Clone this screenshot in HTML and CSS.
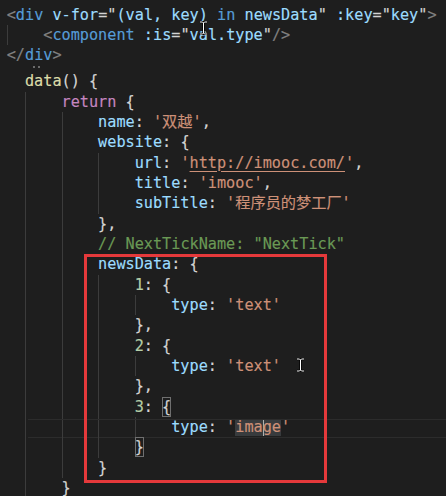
FILE: index.html
```html
<!DOCTYPE html>
<html lang="en">
<head>
    <meta charset="UTF-8">
    <meta name="viewport" content="width=device-width, initial-scale=1.0">
    <title>newsData</title>
    <link rel="stylesheet" href="styles.css">
</head>
<body>
    <div class="editor">
        <div class="line"><span class="pu">&lt;</span><span class="tg">div</span> <span class="at">v-for</span>="<span class="at">(val, key)</span> <span class="tg">in</span> <span class="at">newsData</span>" <span class="at">:key</span>="<span class="at">key</span>"<span class="pu">&gt;</span></div>
        <div class="line"><span class="g"></span><span class="pu">&lt;</span><span class="tg">component</span> <span class="at">:is</span>="<span class="at">val.type</span>"<span class="pu">/&gt;</span></div>
        <div class="line"><span class="pu">&lt;/</span><span class="tg">div</span><span class="pu">&gt;</span></div>
        <div class="gap"><span class="dot"></span><span class="dot"></span></div>

        <div class="line"><span class="s2"></span><span class="fn">data</span>() {</div>
        <div class="line"><span class="s2"></span><span class="g"></span><span class="kw">return</span> {</div>
        <div class="line"><span class="s2"></span><span class="g"></span><span class="g"></span><span class="at">name</span>: <span class="st">'双越'</span>,</div>
        <div class="line"><span class="s2"></span><span class="g"></span><span class="g"></span><span class="at">website</span>: {</div>
        <div class="line"><span class="s2"></span><span class="g"></span><span class="g"></span><span class="g"></span><span class="at">url</span>: <span class="st">'<u>http://imooc.com/</u>'</span>,</div>
        <div class="line"><span class="s2"></span><span class="g"></span><span class="g"></span><span class="g"></span><span class="at">title</span>: <span class="st">'imooc'</span>,</div>
        <div class="line"><span class="s2"></span><span class="g"></span><span class="g"></span><span class="g"></span><span class="at">subTitle</span>: <span class="st">'程序员的梦工厂'</span></div>
        <div class="line"><span class="s2"></span><span class="g"></span><span class="g"></span>},</div>
        <div class="line"><span class="s2"></span><span class="g"></span><span class="g"></span><span class="cm">// NextTickName: "NextTick"</span></div>
        <div class="line"><span class="s2"></span><span class="g"></span><span class="g"></span><span class="at">newsData</span>: {</div>
        <div class="line"><span class="s2"></span><span class="g"></span><span class="g"></span><span class="g"></span><span class="nu">1</span>: {</div>
        <div class="line"><span class="s2"></span><span class="g"></span><span class="g"></span><span class="g"></span><span class="g"></span><span class="at">type</span>: <span class="st">'text'</span></div>
        <div class="line"><span class="s2"></span><span class="g"></span><span class="g"></span><span class="g"></span>},</div>
        <div class="line"><span class="s2"></span><span class="g"></span><span class="g"></span><span class="g"></span><span class="nu">2</span>: {</div>
        <div class="line"><span class="s2"></span><span class="g"></span><span class="g"></span><span class="g"></span><span class="g"></span><span class="at">type</span>: <span class="st">'text'</span></div>
        <div class="line"><span class="s2"></span><span class="g"></span><span class="g"></span><span class="g"></span>},</div>
        <div class="line"><span class="s2"></span><span class="g"></span><span class="g"></span><span class="g"></span><span class="nu">3</span>: <span class="match">{</span></div>
        <div class="line current"><span class="s2"></span><span class="g"></span><span class="g"></span><span class="g"></span><span class="g"></span><span class="at">type</span>: <span class="st">'<span class="word">ima<span class="caret"></span>ge</span>'</span></div>
        <div class="line"><span class="s2"></span><span class="g"></span><span class="g"></span><span class="g"></span><span class="match">}</span></div>
        <div class="line"><span class="s2"></span><span class="g"></span><span class="g"></span>}</div>
        <div class="line"><span class="s2"></span><span class="g"></span>}</div>

        <div class="mark"></div>

        <svg class="ibeam ibeam-top" width="9" height="14" viewBox="0 0 9 14">
            <path d="M1 1h2.5l1 1 1-1H8M4.5 2v10M1 13h2.5l1-1 1 1H8" fill="none" stroke="#000" stroke-width="2.4"/>
            <path d="M1 1h2.5l1 1 1-1H8M4.5 2v10M1 13h2.5l1-1 1 1H8" fill="none" stroke="#fff" stroke-width="1"/>
        </svg>
        <svg class="ibeam ibeam-mid" width="9" height="14" viewBox="0 0 9 14">
            <path d="M1 1h2.5l1 1 1-1H8M4.5 2v10M1 13h2.5l1-1 1 1H8" fill="none" stroke="#000" stroke-width="2.4"/>
            <path d="M1 1h2.5l1 1 1-1H8M4.5 2v10M1 13h2.5l1-1 1 1H8" fill="none" stroke="#fff" stroke-width="1"/>
        </svg>
    </div>
</body>
</html>
```

FILE: styles.css
```css
* { margin: 0; padding: 0; box-sizing: border-box; }
body {
    background: #1e1e1e;
    width: 446px; height: 496px; overflow: hidden;
}
.editor {
    position: relative;
    height: 496px;
    padding: 4.5px 0 0 6.7px;
    font-family: 'DejaVu Sans Mono', 'Noto Sans CJK SC', monospace;
    font-size: 15.2px; line-height: 20.35px;
    color: #d4d4d4;
    -webkit-text-stroke: 0.15px;
}
.line { height: 20.35px; white-space: pre; position: relative; }
.gap { height: 5.65px; display: flex; gap: 3px; padding: 0 0 0 26px; }
.dot { width: 2px; height: 2px; background: #6b6b6b; }

/* indent */
.s2, .g { display: inline-block; vertical-align: top; height: 20.35px; }
.s2 { width: 2ch; }
.g { width: 4ch; border-left: 1px solid #3c3c3c; }

/* tokens */
.pu { color: #808080; }
.tg { color: #569cd6; }
.at { color: #9cdcfe; }
.st { color: #ce9178; }
.st u { text-decoration-thickness: 1px; text-underline-offset: 3px; }
.kw { color: #c586c0; }
.fn { color: #dcdcaa; }
.cm { color: #6a9955; }
.nu { color: #b5cea8; }

/* editor state */
.match { outline: 1px solid #6f6f6f; outline-offset: -1px; display: inline-block; height: 20px; }
.current::after {
    content: ""; position: absolute; left: 21px; right: 0; top: 2px; bottom: -1px;
    border-top: 1px solid #2c2c2c; border-bottom: 1px solid #2c2c2c;
}
.word { background: #383b3d; display: inline-block; line-height: 17px; margin-top: 2px; vertical-align: top; }
.caret {
    display: inline-block; width: 1.5px; height: 17px; margin-right: -1.5px;
    background: #aeafad; vertical-align: top;
}

/* annotation box */
.mark {
    position: absolute; left: 84px; top: 254px;
    width: 243px; height: 229px;
    border: 3px solid #e5393b;
}
.ibeam { position: absolute; }
.ibeam-top { left: 199px; top: 21px; }
.ibeam-mid { left: 296px; top: 358px; }
```
